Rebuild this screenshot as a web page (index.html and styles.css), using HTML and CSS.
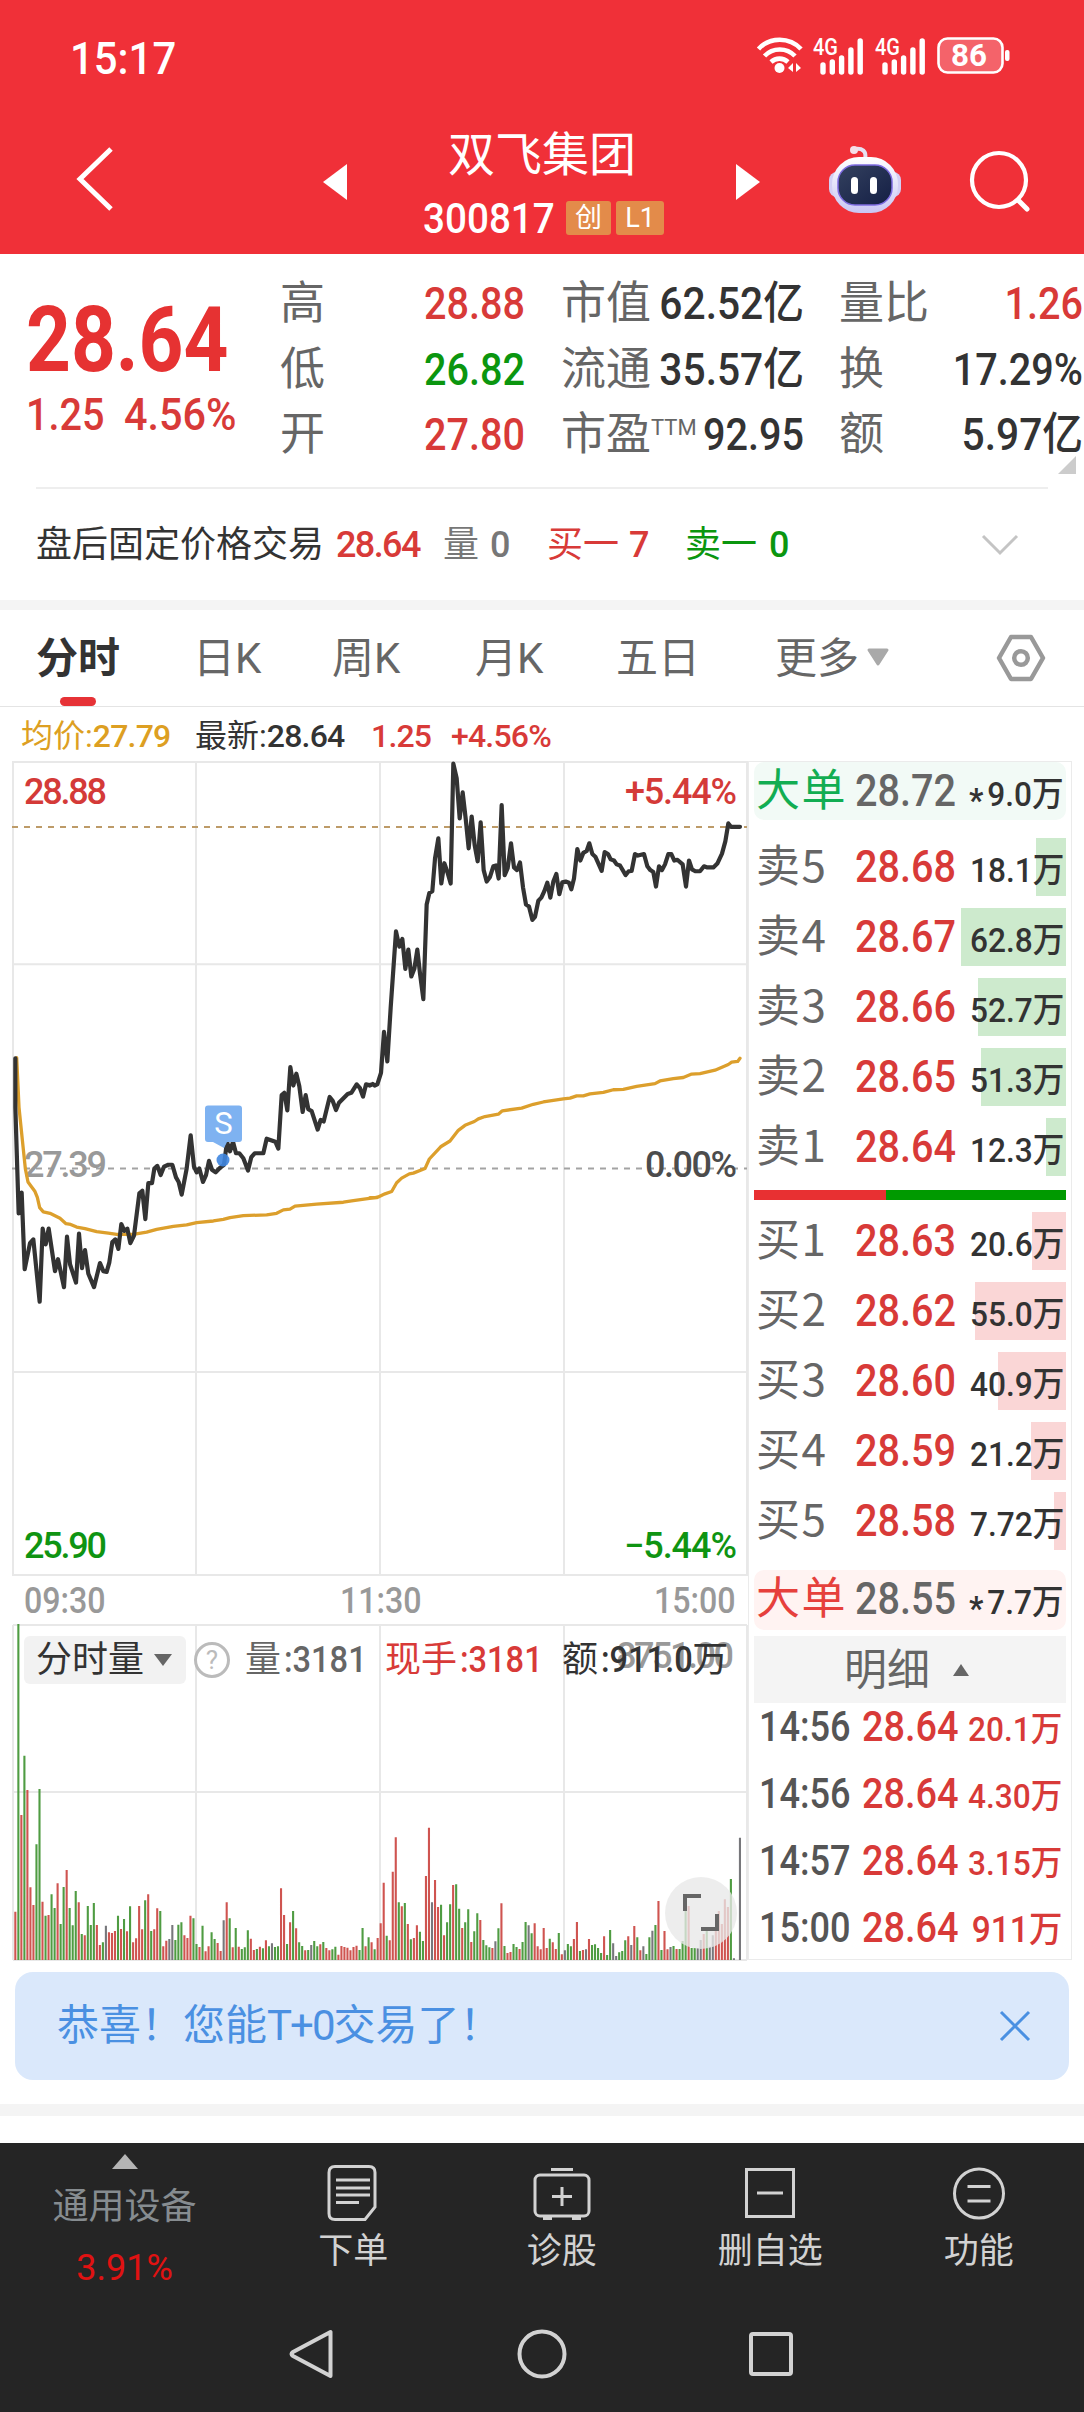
FILE: index.html
```html
<!DOCTYPE html>
<html lang="zh-CN">
<head>
<meta charset="utf-8">
<title>双飞集团 300817</title>
<link rel="stylesheet" href="styles.css">
</head>
<body>
<header class="top">
  <div class="status">
    <span class="clock n">15:17</span>
    <svg class="signals" width="256" height="44" viewBox="756 34 256 44">
      <g fill="none" stroke="#fff" stroke-width="4.6">
        <path d="M758.500 49 A29 29 0 0 1 801 49"/>
        <path d="M764.500 56 A21 21 0 0 1 795 56"/>
        <path d="M771 62 A12.500 12.500 0 0 1 788 62"/>
      </g>
      <circle cx="779.500" cy="68" r="5" fill="#fff"/>
      <path d="M793 63v9l-5-4zM796 63v9l5-4z" fill="#fff"/>
      <g fill="#fff" font-size="23" font-weight="500">
        <text x="813" y="55" textLength="25" lengthAdjust="spacingAndGlyphs">4G</text>
        <text x="875" y="55" textLength="25" lengthAdjust="spacingAndGlyphs">4G</text>
      </g>
      <path stroke="#fff" stroke-width="5.400" stroke-linecap="round" d="M823 65v7M832.300 62v10M841.600 58v14M850.900 50v22M860.200 41v31M885 65v7M894.300 62v10M903.600 58v14M912.900 50v22M922.200 41v31"/>
      <rect x="938.500" y="38.500" width="64" height="34" rx="9" fill="#f4636a" stroke="#fff" stroke-width="2.600"/>
      <rect x="1005" y="50" width="4.500" height="11" rx="2" fill="#fff"/>
      <text x="951" y="66" font-size="32" font-weight="700" fill="#fff" textLength="36" lengthAdjust="spacingAndGlyphs">86</text>
    </svg>
  </div>
  <nav class="title-bar">
    <svg class="back" width="40" height="68" viewBox="0 0 40 68"><path d="M36 4 5 34 36 64" fill="none" stroke="#fff" stroke-width="5"/></svg>
    <svg class="prev" width="24" height="36" viewBox="0 0 24 36"><path d="M24 0v36L0 18z" fill="#fff"/></svg>
    <div class="stock">
      <h1>双飞集团</h1>
      <div class="code"><span class="n digits">300817</span><span class="tag">创</span><span class="tag">L1</span></div>
    </div>
    <svg class="next" width="24" height="36" viewBox="0 0 24 36"><path d="M0 0v36l24-18z" fill="#fff"/></svg>
    <svg class="robot" width="76" height="70" viewBox="0 0 76 70">
      <defs>
        <linearGradient id="shell" x1="0" y1="0" x2="0" y2="1"><stop offset="0" stop-color="#fff"/><stop offset="1" stop-color="#c9c6f4"/></linearGradient>
        <linearGradient id="face" x1="0" y1="0" x2="1" y2="1"><stop offset="0" stop-color="#34415f"/><stop offset="1" stop-color="#141f45"/></linearGradient>
      </defs>
      <path d="M38 14C40 6 35 3 28 4" fill="none" stroke="#e6e2f2" stroke-width="4" stroke-linecap="round"/>
      <circle cx="27" cy="5" r="4" fill="#f6dfe8"/>
      <rect x="2" y="27" width="72" height="25" rx="8" fill="#d3cff5"/>
      <rect x="5" y="12" width="66" height="56" rx="27" fill="url(#shell)"/>
      <rect x="11" y="20" width="54" height="40" rx="17" fill="url(#face)" stroke="#7d6be0" stroke-width="1.500"/>
      <rect x="24" y="32" width="7" height="17" rx="3.500" fill="#fff"/><rect x="43" y="32" width="7" height="17" rx="3.500" fill="#fff"/>
    </svg>
    <svg class="search" width="64" height="62" viewBox="0 0 64 62"><circle cx="31" cy="30" r="27" fill="none" stroke="#fff" stroke-width="4.200"/><path d="M51 51l8 8" stroke="#fff" stroke-width="5" stroke-linecap="round"/></svg>
  </nav>
</header>

<section class="quote">
  <div class="last">
    <div class="price n">28.64</div>
    <div class="change"><span class="n">1.25</span><span class="n">4.56%</span></div>
  </div>
  <div class="facts">
    <span class="k">高</span><span class="v up n r">28.88</span><span class="k">市值</span><span class="v n r yi">62.52亿</span><span class="k">量比</span><span class="v up n r">1.26</span>
    <span class="k">低</span><span class="v down n r">26.82</span><span class="k">流通</span><span class="v n r yi">35.57亿</span><span class="k">换</span><span class="v n r">17.29%</span>
    <span class="k">开</span><span class="v up n r">27.80</span><span class="k">市盈<sup>TTM</sup></span><span class="v n r">92.95</span><span class="k">额</span><span class="v n r yi">5.97亿</span>
  </div>
  <i class="corner"></i>
</section>
<section class="after">
  <span>盘后固定价格交易</span><span class="up m">28.64</span><span class="mute">量</span><span class="mute m">0</span><span class="up">买一</span><span class="up m">7</span><span class="down">卖一</span><span class="down m">0</span>
  <svg width="38" height="24" viewBox="0 0 38 24"><path d="M2 2l17 17L36 2" fill="none" stroke="#c4c4c4" stroke-width="3"/></svg>
</section>

<nav class="tabs">
  <span class="on">分时</span><span>日K</span><span>周K</span><span>月K</span><span>五日</span><span>更多</span>
  <svg width="24" height="20" viewBox="0 0 24 20"><path d="M3 2h18L12 16z" fill="#a9a9a9" stroke="#a9a9a9" stroke-width="3" stroke-linejoin="round"/></svg>
  <svg width="50" height="48" viewBox="0 0 50 48"><path d="M15 3h20l12 21-12 21H15L3 24z" fill="none" stroke="#999" stroke-width="4.500" stroke-linejoin="round"/><circle cx="25" cy="24" r="6.800" fill="none" stroke="#999" stroke-width="4.500"/></svg>
</nav>
<div class="legend"><span class="avg">均价:<b class="m">27.79</b></span><span>最新:<b class="m">28.64</b></span><span class="up m">1.25</span><span class="up m">+4.56%</span></div>

<main class="board">
  <div class="charts">
    <svg class="trend" width="748" height="815" viewBox="0 761 748 815">
      <g fill="none" stroke="#e8e8e8" stroke-width="2">
        <path d="M13 762H747V1575H13zM196 762v813M380 762v813M564 762v813M13 964.300H747M13 1372H747"/>
      </g>
      <path d="M12 827H747" stroke="#bd9b68" stroke-width="2" stroke-dasharray="6 6"/>
      <path d="M12 1168.600H747" stroke="#a3a3a3" stroke-width="2" stroke-dasharray="6 6"/>
      <g class="axis">
        <text x="24" y="804" fill="#d43a38" textLength="83">28.88</text>
        <text x="625" y="804" fill="#d43a38" textLength="112">+5.44%</text>
        <text x="24" y="1177" fill="#999" textLength="83">27.39</text>
        <text x="645" y="1177" fill="#4c4c4c" textLength="92">0.00%</text>
        <text x="24" y="1558" fill="#0f9412" textLength="83">25.90</text>
        <text x="624" y="1558" fill="#0f9412" textLength="113">−5.44%</text>
      </g>
      <g fill="none" stroke-linejoin="round" stroke-linecap="round">
        <g stroke="#dc9f2c">
          <path class="curve" transform="translate(0,740) scale(.33333,.38265)" d="M50 830 57 960 67 1045 76 1120 84 1155 95 1168 105 1180 112 1195 119 1222 130 1233 150 1237 180 1250 198 1264 212 1266 230 1273 255 1277 290 1285 325 1289 350 1292 400 1292 440 1286 470 1279 520 1271 560 1267 590 1261 640 1257 670 1253 690 1248 730 1243 800 1241 830 1237 850 1228 870 1226 885 1218 950 1213 1030 1208 1060 1204 1130 1195"/>
          <path class="curve" transform="translate(370,740) scale(.33333,.38265)" d="M0 1196H20L45 1186 65 1180 80 1157 95 1145 118 1134 130 1132 165 1120 178 1095 212 1063 240 1048 265 1020 285 1007 313 997 325 990 345 984 385 978 397 969 455 962 490 952 520 946 580 938 600 936 620 930 640 930 660 925 700 921 730 914 760 913 800 905 855 898 870 891 910 885 940 882 965 873 990 872 1035 863 1075 848 1085 842 1103 840 1110 832"/>
        </g>
        <g stroke="#333">
          <path class="curve bold" transform="translate(0,740) scale(.33333,.38265)" d="M46 832V960L56 1237 65 1183 74 1383 90 1315 100 1305 119 1468 128 1277 137 1318 146 1277 165 1388 174 1357 192 1430 201 1298 210 1370 228 1418 237 1290 246 1380 255 1333 265 1395 282 1430 300 1367 310 1388 320 1390 328 1365 337 1312 346 1305 355 1330 364 1265 373 1283 382 1277 391 1315 402 1295 418 1185 427 1178 436 1252 445 1158 456 1158 463 1120 472 1113 482 1137 492 1115 505 1110 517 1110 528 1143 536 1155 545 1188 560 1120 572 1033 582 1115 590 1130 598 1120 609 1155 618 1137 627 1100 636 1123 647 1130 660 1118 672 1110 681 1050 690 1075 699 1050 708 1080 718 1080 730 1093 744 1125 754 1090 764 1080 790 1080 800 1042 826 1050 835 1068 845 928 853 922 862 968 871 855 880 903 889 872 898 905 908 972 917 928 925 965 935 970 953 1018 962 993 971 997 989 933 998 943 1008 967 1017 948 1043 925 1054 922 1070 900 1080 910 1089 932 1098 900 1107 902 1112 901"/>
          <path class="curve bold" transform="translate(370,740) scale(.33333,.38265)" d="M0 903 8 899 14 903 22 900 33 870 42 763 52 840 62 700 78 500 88 540 97 520 106 598 115 548 124 618 133 598 142 548 150 610 160 677 170 430 178 400 187 395 195 310 205 257 214 375 223 322 232 345 242 375 250 62 260 100 269 205 278 137 287 205 296 283 305 200 314 275 323 317 332 215 341 340 350 370 360 358 370 330 378 328 386 362 395 170 404 353 413 335 423 270 432 333 441 340 450 320 459 385 468 430 477 435 487 470 495 462 505 420 514 412 523 395 532 373 541 412 550 370 559 350 568 403 577 372 587 370 597 373 604 390 612 362 622 285 631 315 640 295 650 290 658 270 667 298 676 305 695 342 704 293 714 298 722 312 732 315 740 325 750 328 767 353 776 343 785 342 795 298 804 302 822 298 832 330 841 340 850 345 858 383 867 330 876 340 885 325 895 298 904 298 913 315 922 313 938 325 948 383 957 315 966 338 976 343 990 343 1002 330 1012 333 1030 333 1042 323 1056 297 1066 265 1075 218 1083 227 1110 227"/>
        </g>
      </g>
      <path d="M208 1105.500h31q3 0 3 3V1139q0 3-3 3H227L224 1148 213 1142H208q-3 0-3-3V1108.500q0-3 3-3z" fill="#7eb2f1"/>
      <circle cx="223" cy="1160" r="6.500" fill="#3f86e0" opacity=".9"/>
      <text x="223.500" y="1134" text-anchor="middle" fill="#fff" font-size="31">S</text>
    </svg>
    <div class="times"><span class="n">09:30</span><span class="n">11:30</span><span class="n">15:00</span></div>
    <div class="volume">
      <svg width="748" height="337" viewBox="0 1624 748 337">
        <path d="M13 1625H747M13 1792H747M13 1960H747M13 1625v335M196 1625v335M380 1625v335M564 1625v335M747 1625v335" stroke="#e8e8e8" stroke-width="2"/>
        <g id="bars" transform="translate(0,1560) scale(.33333)" fill="none" stroke-width="6.300"></g>
        <text class="vmax" x="616" y="1668" textLength="118" fill="#999">8751.00</text>
      </svg>
      <div class="vbar">
        <span class="pick">分时量<i></i></span>
        <span class="help">?</span>
        <span class="mute">量<b class="n">:3181</b></span>
        <span class="up">现手<b class="n">:3181</b></span>
        <span>额<b class="n tight">:911.0</b>万</span>
      </div>
      <span class="expand"><svg width="36" height="38" viewBox="0 0 36 38"><path d="M2 17V2h16M18 35h16V20" fill="none" stroke="#666" stroke-width="4"/></svg></span>
    </div>
  </div>

  <aside class="book">
    <div class="row big ask"><span class="lab">大单</span><span class="p n">28.72</span><span class="q"><b class="star">*</b>9.0万</span></div>
    <div class="levels">
      <div class="row"><i class="depth s" style="width:30px"></i><span class="lab">卖5</span><span class="p n">28.68</span><span class="q">18.1万</span></div>
      <div class="row"><i class="depth s" style="width:105px"></i><span class="lab">卖4</span><span class="p n">28.67</span><span class="q">62.8万</span></div>
      <div class="row"><i class="depth s" style="width:88px"></i><span class="lab">卖3</span><span class="p n">28.66</span><span class="q">52.7万</span></div>
      <div class="row"><i class="depth s" style="width:85px"></i><span class="lab">卖2</span><span class="p n">28.65</span><span class="q">51.3万</span></div>
      <div class="row"><i class="depth s" style="width:20px"></i><span class="lab">卖1</span><span class="p n">28.64</span><span class="q">12.3万</span></div>
    </div>
    <div class="ratio"><i style="width:132px"></i></div>
    <div class="levels bids">
      <div class="row"><i class="depth" style="width:34px"></i><span class="lab">买1</span><span class="p n">28.63</span><span class="q">20.6万</span></div>
      <div class="row"><i class="depth" style="width:91px"></i><span class="lab">买2</span><span class="p n">28.62</span><span class="q">55.0万</span></div>
      <div class="row"><i class="depth" style="width:68px"></i><span class="lab">买3</span><span class="p n">28.60</span><span class="q">40.9万</span></div>
      <div class="row"><i class="depth" style="width:35px"></i><span class="lab">买4</span><span class="p n">28.59</span><span class="q">21.2万</span></div>
      <div class="row"><i class="depth" style="width:12px"></i><span class="lab">买5</span><span class="p n">28.58</span><span class="q">7.72万</span></div>
    </div>
    <div class="row big bid"><span class="lab">大单</span><span class="p n">28.55</span><span class="q"><b class="star">*</b>7.7万</span></div>
    <div class="detail">明细<i></i></div>
    <div class="ticks">
      <div><span class="t n">14:56</span><span class="n">28.64</span><span class="q">20.1万</span></div>
      <div><span class="t n">14:56</span><span class="n">28.64</span><span class="q">4.30万</span></div>
      <div><span class="t n">14:57</span><span class="n">28.64</span><span class="q">3.15万</span></div>
      <div><span class="t n">15:00</span><span class="n">28.64</span><span class="q last-q">911万</span></div>
    </div>
  </aside>
</main>

<div class="notice"><span>恭喜！您能<b>T+0</b>交易了！</span><svg width="32" height="32" viewBox="0 0 32 32"><path d="M2 2l28 28M30 2 2 30" stroke="#4a90e2" stroke-width="3"/></svg></div>
<div class="band"></div>

<footer class="foot">
  <div class="actions">
    <div class="index"><i></i><span>通用设备</span><b class="n">3.91%</b></div>
    <div class="act"><svg width="58" height="56" viewBox="0 0 58 56"><path d="M11 1.500h34q6 0 6 6V42L41 54.500H11q-6 0-6-6V7.500q0-6 6-6z"/><path d="M12 15h34M12 23h34M12 30h34M12 37.500h23"/></svg><span>下单</span></div>
    <div class="act"><svg width="58" height="56" viewBox="0 0 58 56"><rect x="2" y="10" width="54" height="41" rx="5"/><path d="M18 4.500h22M29 22v19M19 31.500h20M10 53.500h9M39 53.500h9"/></svg><span>诊股</span></div>
    <div class="act"><svg width="58" height="56" viewBox="0 0 58 56"><rect x="5.500" y="4.500" width="47" height="47"/><path d="M16 28h26"/></svg><span>删自选</span></div>
    <div class="act"><svg width="58" height="56" viewBox="0 0 58 56"><circle cx="29" cy="28.500" r="24.500"/><path d="M17.500 21.500h23M17.500 36h23"/></svg><span>功能</span></div>
  </div>
  <div class="sys">
    <svg width="48" height="52" viewBox="0 0 48 52"><path d="M42.500 4V48L5 28q-3-2 0-4z"/></svg>
    <svg width="52" height="52" viewBox="0 0 52 52"><circle cx="26" cy="26" r="22.500"/></svg>
    <svg width="48" height="48" viewBox="0 0 48 48"><rect x="4" y="4" width="40" height="40" rx="2"/></svg>
  </div>
</footer>
<script src="app.js"></script>
</body>
</html>
```
FILE: styles.css
```css
* { box-sizing: border-box; }
body {
  margin: 0;
  width: 1084px;
  background: #fff;
  color: #333;
  font-family: Roboto, "Noto Sans CJK SC", sans-serif;
}
svg { display: block; }
svg text { font-family: Roboto, "Noto Sans CJK SC", sans-serif; }
b, i { font-style: normal; }
.n { display: inline-block; font-weight: 500; transform: scaleX(.88); transform-origin: 0 50%; white-space: nowrap; }
.n.r { transform-origin: 100% 50%; text-align: right; }
.n.yi { transform: scaleX(.905); }
.n.tight { margin-right: -.28em; }
.m { font-weight: 500; letter-spacing: -.035em; }
.up { color: #d83a38 !important; }
.down { color: #0b960f !important; }
.mute { color: #666; }

.top { height: 254px; background: #f03038; color: #fff; }
.status { height: 114px; display: flex; justify-content: space-between; align-items: center; padding: 0 72px 0 70px; }
.clock { font-size: 45px; line-height: 60px; transform: scaleX(.93); margin-top: 3px; }
.signals { margin-top: -2px; }
.title-bar { height: 140px; display: grid; grid-template-columns: 75px 248px 24px 90px 188px 110px 24px 69px 76px 62px 64px; align-items: start; }
.back { grid-column: 2; margin-top: 31px; }
.prev { grid-column: 3; margin-top: 50px; }
.stock { grid-column: 4 / 7; text-align: center; padding: 11px 0 0; }
.next { grid-column: 7; margin-top: 50px; margin-left: 1px; }
.robot { grid-column: 9; margin: 31px 0 0 -1px; }
.search { grid-column: 11; margin: 36px 0 0 2px; }
.stock h1 { margin: 0; font-size: 47px; line-height: 60px; font-weight: 400; padding-left: 2px; }
.code { display: grid; grid-template-columns: 139px 45px 48px; column-gap: 5px; padding-left: 75px; margin-top: 16px; }
.code .digits { font-size: 42px; line-height: 34px; text-align: left; transform: scaleX(.92); margin: 1px 0 0 1px; }
.tag { height: 34px; line-height: 34px; border-radius: 3px; background: #e38b4a; font-size: 27px; }

.quote { position: relative; height: 237px; padding-top: 17px; display: grid; grid-template-columns: 282px 1fr; border-bottom: 2px solid #fff; background: linear-gradient(#eee, #eee) 36px 100% / 1012px 2px no-repeat; }
.last { color: #e63232; padding: 25px 0 0 26px; }
.price { font-size: 90px; line-height: 90px; font-weight: 700; transform: scaleX(.87); }
.change { display: grid; grid-template-columns: 98px 1fr; font-size: 45px; line-height: 60px; color: #d83a38; margin-top: -1px; }
.change .n:last-child { transform: scaleX(.92); }
.facts { display: grid; grid-template-columns: 100px 143px 38px 70px 171px 37px 80px 165px; grid-template-rows: repeat(3, 65.5px); line-height: 65.500px; font-size: 45px; }
.facts .k { color: #666; font-size: 45px; white-space: nowrap; margin-left: -2px; }
.facts .k:nth-child(6n+1) { grid-column: 1; }
.facts .v:nth-child(6n+2) { grid-column: 2; }
.facts .k:nth-child(6n+3) { grid-column: 4; }
.facts .v:nth-child(6n+4) { grid-column: 5; }
.facts .k:nth-child(6n+5) { grid-column: 7; }
.facts .v:nth-child(6n+6) { grid-column: 8; margin-right: 3px; }
.facts sup { font-size: 22px; line-height: 0; vertical-align: 15px; }
.corner { position: absolute; left: 1058px; top: 202px; border-left: 18px solid transparent; border-bottom: 18px solid #ccc; }
.after { height: 119px; border-bottom: 10px solid #f4f4f4; display: grid; grid-template-columns: 300px 107px 47px 57px 82px 56px 84px 212px 38px; padding-left: 36px; line-height: 109px; font-size: 36px; align-items: center; white-space: nowrap; }
.after .mute { color: #777; }
.after .m { letter-spacing: -.045em; }
.after span { height: 109px; }

.tabs { height: 97px; border-bottom: 1px solid #e4e4e4; display: grid; grid-template-columns: 157px 139px 143px 141px 159px 91px 130px 50px; padding-left: 36px; align-items: center; line-height: 97px; font-size: 42px; color: #666; }
.tabs span { height: 96px; white-space: nowrap; }
.tabs .on { color: #333; font-weight: 700; }
.tabs .on::after { content: ""; display: block; width: 36px; height: 9px; border-radius: 5px; background: #e63236; margin: -10px 0 0 24px; }
.legend { height: 54px; line-height: 59px; font-size: 32px; display: grid; grid-template-columns: 174px 176px 80px 200px; padding-left: 21px; white-space: nowrap; }
.legend .avg { color: #dd9f22; }
.legend .m { letter-spacing: -.025em; }

.board { display: grid; grid-template-columns: 748px 324px; height: 1200px; }
.axis { font-size: 36px; font-weight: 500; }
.curve { vector-effect: non-scaling-stroke; stroke-width: 3.300px; }
.curve.bold { stroke-width: 4.200px; }
.times { height: 48px; display: grid; grid-template-columns: 316px 314px 1fr; padding-left: 24px; line-height: 50px; font-size: 37px; color: #999; }
.times .n { transform: scaleX(.87); }
.volume { position: relative; height: 337px; }
.vmax { font-size: 36px; font-weight: 500; }
.vbar { position: absolute; left: 24px; top: 12px; display: grid; grid-template-columns: 170px 51px 140px 177px 180px; font-size: 36px; line-height: 49px; white-space: nowrap; }
.vbar .n { margin-left: 3px; transform: scaleX(.905); }
.pick { width: 162px; height: 48px; border-radius: 6px; background: #f2f2f2; padding-left: 12px; display: flex; align-items: center; gap: 10px; }
.pick i { border: 9px solid transparent; border-top: 12px solid #666; border-bottom: 0; }
.help { width: 36px; height: 36px; margin-top: 6px; border: 3px solid #bbb; border-radius: 50%; color: #bbb; font-size: 26px; line-height: 30px; text-align: center; }
.expand { position: absolute; left: 665px; top: 253px; width: 72px; height: 72px; border-radius: 50%; background: rgba(232,232,232,.78); display: flex; align-items: center; justify-content: center; }

.book { border: 1px solid #ebebeb; padding: 0 5px; height: 1199px; }
.row { position: relative; height: 58px; display: grid; grid-template-columns: 98px 108px 1fr; align-items: baseline; padding: 0 2px; line-height: 58px; }
.row > span { position: relative; }
.lab { font-family: "Noto Sans CJK SC", sans-serif; font-size: 44px; line-height: 44px; letter-spacing: 1.5px; color: #666; }
.p { font-size: 45px; color: #d83a38; margin-left: 1px; }
.q { font-size: 34px; line-height: 34px; font-weight: 500; display: inline-block; transform: scaleX(.93); transform-origin: 100% 50%; justify-self: end; white-space: nowrap; }
.star { position: relative; top: 6px; margin-right: 4px; }
.big { height: 58px; border-radius: 10px; }
.big .p { color: #666; }
.big.ask { background: #f2faf6; }
.big.ask .lab { color: #12ad52; }
.big.bid { background: #fff3f2; height: 60px; margin-top: 20px; }
.big.bid .lab { color: #e6403c; }
.levels { display: grid; gap: 12px; margin-top: 18px; }
.levels.bids { margin-top: 12px; }
.depth { position: absolute; right: 0; top: 0; height: 58px; background: #fad6d6; }
.depth.s { background: #cdeacd; }
.ratio { height: 10px; margin-top: 14px; background: #009a00; }
.ratio i { display: block; height: 10px; background: #e83032; }
.detail { margin-top: 6px; height: 67px; background: #f4f4f4; color: #666; font-size: 43px; line-height: 68px; display: flex; align-items: center; gap: 23px; padding-left: 90px; }
.detail i { border: 8.500px solid transparent; border-bottom: 12px solid #666; border-top: 0; }
.ticks { display: grid; gap: 23px; padding-top: 1px; }
.ticks > div { height: 44px; line-height: 44px; display: grid; grid-template-columns: 103px 98px 1fr; align-items: baseline; padding: 0 4px 0 5px; font-size: 43px; color: #d83a38; }
.ticks .t { color: #555; transform: scaleX(.84); }
.ticks .n + .n { transform: scaleX(.88); }
.ticks .last-q { font-size: 36px; }

.notice { margin: 11px 15px 24px; height: 108px; border-radius: 18px; background: #dae8fb; color: #4a90e2; display: flex; align-items: center; justify-content: space-between; padding: 0 38px 0 42px; font-size: 42px; line-height: 110px; }
.notice b { font-weight: 400; letter-spacing: -2px; }
.band { height: 12px; background: #f4f4f4; margin-bottom: 27px; }

.foot { height: 269px; background: #252525; }
.foot svg { fill: none; stroke: #d2d2d2; stroke-width: 3; }
.actions { height: 150px; display: grid; grid-template-columns: 249px repeat(4, 208.500px); }
.index { display: flex; flex-direction: column; align-items: center; padding-top: 11px; font-size: 36px; color: #868c90; }
.index i { border: 13px solid transparent; border-bottom: 15px solid #b5b5b5; border-top: 0; }
.index span { line-height: 52px; margin-top: 12px; }
.index b { line-height: 50px; color: #e01212; margin-top: 10px; font-weight: 400; transform-origin: 50% 50%; transform: scaleX(1); }
.act { display: flex; flex-direction: column; align-items: center; padding-top: 22px; font-size: 35px; color: #d2d2d2; }
.act span { line-height: 50px; margin-top: 6px; }
.sys { display: flex; padding: 35px 0 0 288px; align-items: center; gap: 180px; }
.sys svg { stroke-width: 4; stroke-linejoin: round; }
.sys svg:nth-child(2) { margin-right: -1px; }
```
FILE: app.js
```js
// Per-minute volume: bar top (thirds of a pixel) and direction: r up, g down, k flat
const data = `1055r 192g 765r 587g 690r 982r 1035r 853g 687g 1025r 1067g 1065r 1003g 1044g 970r 1092g 981g 930r 1044g 1096g
993g 1027r 1122g 1126r 1038g 1095g 1029g 1095r 1155r 1147g 1097k 1117r 1119r 1113r 1067g 1107r 1077g 1114r 1039g 1147r
1135r 1038r 1108r 1021g 1003r 1113g 1108r 1045r 1053g 1159r 1142r 1137k 1095k 1140g 1094g 1087g 1126r 1134r 1067r 1075g
1152g 1161r 1097g 1174r 1159r 1117g 1137g 1149r 1173r 1081k 1027r 1075g 1162r 1104g 1160r 1167g 1162g 1111g 1136r 1170r
1167g 1160r 1165g 1141r 1159g 1150k 1161g 1159g 985r 1065r 1152g 1087r 1053g 1105r 1147g 1158g 1171r 1170g 1155k 1143g
1159g 1153r 1146g 1164r 1171r 1168g 1160g 1184r 1158r 1161r 1163r 1171r 1161r 1157r 1170g 1104g 1159r 1132g 1147r 1168g
1134r 1090r 968r 1127g 1141r 935r 832r 1027g 1039r 1029g 1092r 1138g 1134r 1096r 1115g 1143g 948r 803r 1027k 960r
1041r 1034g 1126r 1087g 1033g 975r 973g 1046g 1104r 1087g 1048g 1146r 1114g 1060g 1080r 1140g 1156g 1162g 1164r 1144k
1105g 1030r 1158g 1179r 1176r 1152g 1161g 1167r 1146g 1086g 1096k 1120g 1090r 1159r 1168r 1104r 1164r 1136g 1147r 1167r
1119g 1183r 1171k 1152g 1159g 1137r 1086r 1173g 1170r 1168k 1137r 1155g 1153g 1164g 1179g 1129r 1185g 1110g 1150k 1188k
1177g 1173g 1141g 1129r 1155k 1098r 1132g 1171r 1159k 1182g 1132g 1112k 1095g 1023r 1170g 1113r 1168r 1161k 1158g 1167r
1167g 1143g 1050g 1038r 1164g 1164g 1164k 1140k 1122r 1108g 1160k 1126k 1110r 1053r 1092r 1018r 1041r 957g 1195k 1200k
833k`.trim().split(/\s+/);

const colors = { r: "#cf5450", g: "#4f9c42", k: "#77777b" };
const paths = { r: "", g: "", k: "" };
data.forEach((item, i) => {
  const dir = item.slice(-1);
  paths[dir] += `M${(46 + i * 9.058).toFixed(1)} 1200V${parseInt(item, 10)}`;
});
const group = document.getElementById("bars");
Object.keys(paths).forEach((dir) => {
  const path = document.createElementNS("http://www.w3.org/2000/svg", "path");
  path.setAttribute("d", paths[dir]);
  path.setAttribute("stroke", colors[dir]);
  group.appendChild(path);
});
```
